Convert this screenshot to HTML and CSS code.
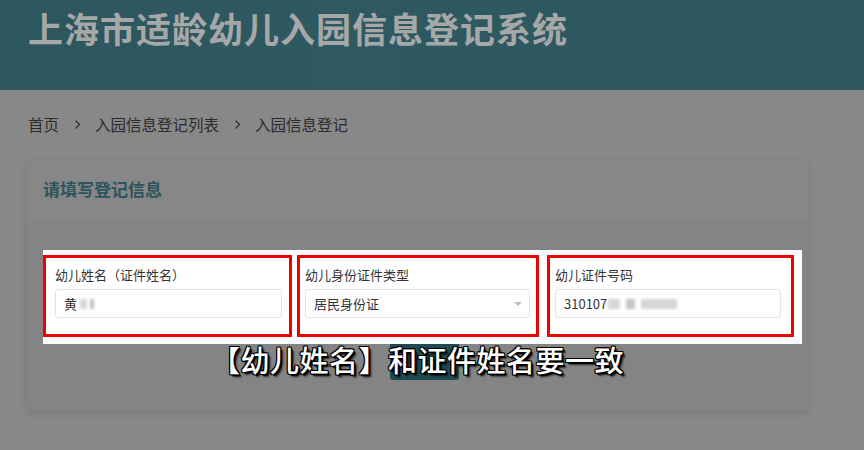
FILE: index.html
```html
<!DOCTYPE html>
<html lang="zh-CN">
<head>
<meta charset="utf-8">
<title>上海市适龄幼儿入园信息登记系统</title>
<link rel="stylesheet" href="styles.css">
</head>
<body>
<header class="top">
  <h1 class="site-title">上海市适龄幼儿入园信息登记系统</h1>
</header>
<nav class="crumbs">
  <span>首页</span>
  <svg class="sep" width="7" height="11" viewBox="0 0 7 11"><path d="M1.5 1.5 L5.5 5.5 L1.5 9.5" fill="none" stroke="#2c2c2c" stroke-width="1.2"/></svg>
  <span>入园信息登记列表</span>
  <svg class="sep" width="7" height="11" viewBox="0 0 7 11"><path d="M1.5 1.5 L5.5 5.5 L1.5 9.5" fill="none" stroke="#2c2c2c" stroke-width="1.2"/></svg>
  <span>入园信息登记</span>
</nav>
<main class="card">
  <div class="card-head">请填写登记信息</div>
  <div class="card-body">
    <div class="spot">
      <div class="field f1">
        <div class="label">幼儿姓名（证件姓名）</div>
        <div class="input"><span>黄</span><span class="blur b1"></span><span class="blur b2"></span></div>
      </div>
      <div class="field f2">
        <div class="label">幼儿身份证件类型</div>
        <div class="input select"><span>居民身份证</span><span class="caret"></span></div>
      </div>
      <div class="field f3">
        <div class="label">幼儿证件号码</div>
        <div class="input"><span>310107</span><span class="blur b3"></span><span class="blur b4"></span><span class="blur b5"></span></div>
      </div>
    </div>
    <button class="submit" aria-label="提交"></button>
  </div>
</main>
<div class="caption">【幼儿姓名】和证件姓名要一致</div>
</body>
</html>
```
FILE: styles.css
```css
* { box-sizing: border-box; }
html, body { margin: 0; padding: 0; }
body {
  width: 864px;
  height: 450px;
  overflow: hidden;
  background: #888888;
  font-family: "Noto Sans CJK SC", "Noto Sans", sans-serif;
  position: relative;
}
.top {
  height: 90px;
  background: linear-gradient(90deg, #2d565e 0%, #2f5961 40%, #2e5860 70%, #2d565e 100%);
  border-bottom: 2px solid #36606700;
  padding: 10px 0 0 28px;
}
.site-title {
  margin: 0;
  font-size: 35px;
  line-height: 35px;
  font-weight: 700;
  color: #a6a8a8;
  letter-spacing: 1px;
}
.crumbs {
  margin: 24px 0 0 28px;
  height: 20px;
  display: flex;
  align-items: center;
  font-size: 15.5px;
  line-height: 20px;
  color: #2c2c2c;
}
.crumbs .sep { margin: 0 14px 0 15px; }
.card {
  margin: 27px 56px 0 27px;
  background: #858585;
  border-radius: 6px;
  box-shadow: 0 2px 8px rgba(0,0,0,0.12);
  overflow: hidden;
}
.card-head {
  height: 60px;
  padding: 17px 0 0 16px;
  font-size: 17px;
  line-height: 22px;
  font-weight: 700;
  color: #2b545c;
  background: #878787;
  border-bottom: 1px solid #828282;
}
.card-body {
  padding: 29px 6px 31px 16px;
  display: flex;
  flex-direction: column;
  background: #848484;
}
.spot {
  background: #ffffff;
  padding: 5px 8px 7px 0;
  display: flex;
}
.field {
  border: 3px solid #f00000;
  padding-top: 8px;
  padding-bottom: 16px;
}
.f1 { width: 249px; padding-left: 9px; padding-right: 7px; }
.f2 { width: 242px; margin-left: 5px; padding-left: 5px; padding-right: 6px; }
.f3 { width: 247px; margin-left: 8px; padding-left: 5px; padding-right: 10px; }
.label {
  font-size: 13px;
  line-height: 18px;
  color: #333333;
}
.input {
  margin-top: 5px;
  height: 29px;
  border: 1px solid #e4e4e4;
  border-radius: 3px;
  padding-left: 8px;
  display: flex;
  align-items: center;
  font-size: 13px;
  color: #333333;
  position: relative;
}
.blur {
  display: inline-block;
  height: 10px;
  background: #d6d6d6;
  filter: blur(1.5px);
}
.b1 { width: 7px; margin-left: 3px; }
.b2 { width: 4px; margin-left: 3px; background: #bdbdbd; }
.b3 { width: 12px; margin-left: 1px; }
.b4 { width: 9px; margin-left: 6px; background: #c6c6c6; }
.b5 { width: 36px; margin-left: 6px; }
.caret {
  position: absolute;
  right: 7px;
  top: 12px;
  width: 0;
  height: 0;
  border-left: 4px solid transparent;
  border-right: 4px solid transparent;
  border-top: 4px solid #bdbdbd;
}
.submit {
  align-self: center;
  margin-left: 3px;
  width: 69px;
  height: 36px;
  border: 0;
  border-radius: 0 0 3px 3px;
  background: #1e4b53;
  padding: 0;
}
.caption {
  position: absolute;
  left: 211px;
  top: 342px;
  font-size: 29px;
  line-height: 34px;
  font-weight: 500;
  letter-spacing: 0.5px;
  color: #ffffff;
  white-space: nowrap;
  text-shadow:
    -1px -1px 0 #000, 1px -1px 0 #000, -1px 1px 0 #000, 1px 1px 0 #000,
    0 -1px 0 #000, 0 1px 0 #000, -1px 0 0 #000, 1px 0 0 #000,
    2px 2px 1px #000, 3px 3px 2px rgba(0,0,0,0.6);
}
```
